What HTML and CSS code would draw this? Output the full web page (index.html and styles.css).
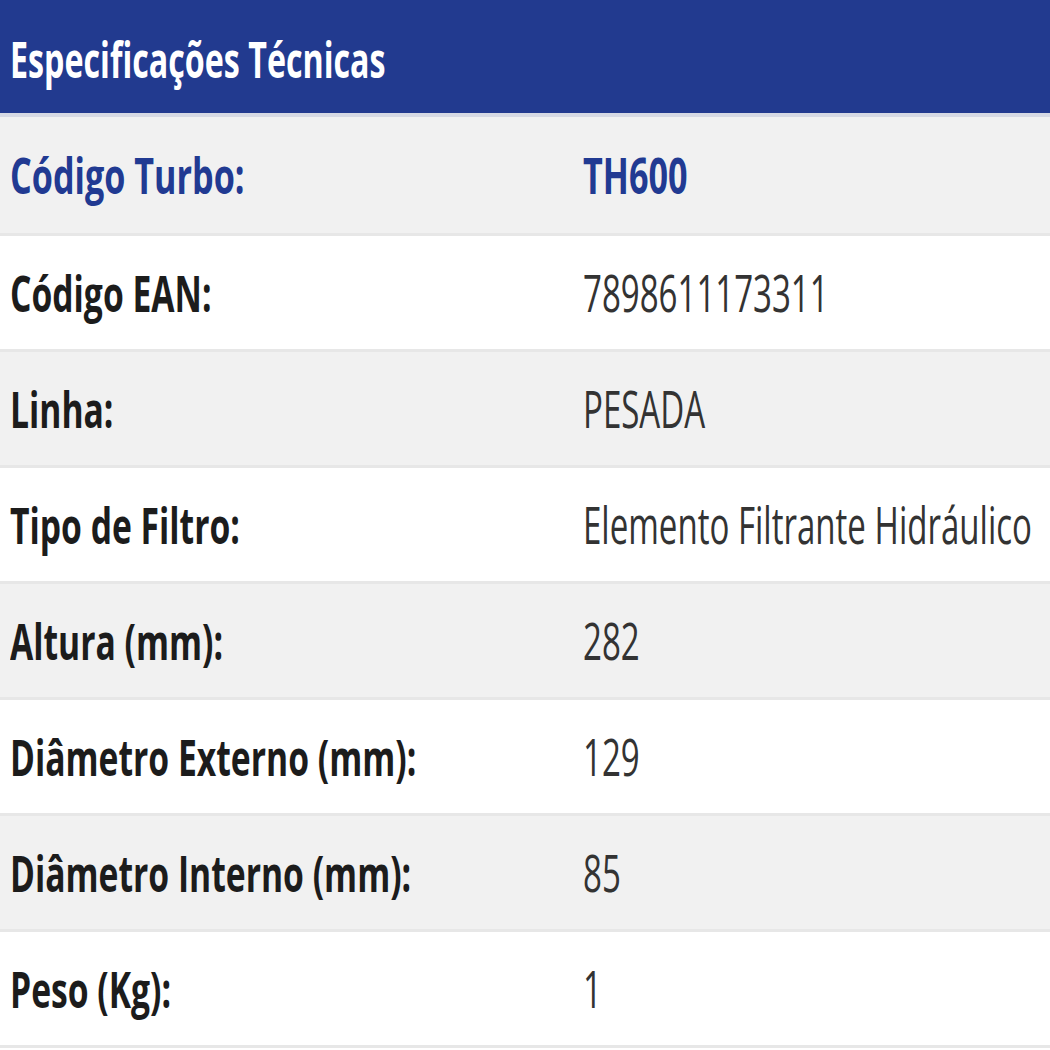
FILE: index.html
```html
<!DOCTYPE html>
<html lang="pt-BR">
<head>
<meta charset="utf-8">
<title>Especificações Técnicas</title>
<link rel="stylesheet" href="styles.css">
</head>
<body>
<section class="specs">
  <h2 class="specs-title"><span class="squeeze">Especificações Técnicas</span></h2>
  <div class="spec-row highlight">
    <div class="label"><span class="squeeze">Código Turbo:</span></div>
    <div class="value"><span class="squeeze">TH600</span></div>
  </div>
  <div class="spec-row">
    <div class="label"><span class="squeeze">Código EAN:</span></div>
    <div class="value"><span class="squeeze">7898611173311</span></div>
  </div>
  <div class="spec-row">
    <div class="label"><span class="squeeze">Linha:</span></div>
    <div class="value"><span class="squeeze">PESADA</span></div>
  </div>
  <div class="spec-row">
    <div class="label"><span class="squeeze">Tipo de Filtro:</span></div>
    <div class="value"><span class="squeeze">Elemento Filtrante Hidráulico</span></div>
  </div>
  <div class="spec-row">
    <div class="label"><span class="squeeze">Altura (mm):</span></div>
    <div class="value"><span class="squeeze">282</span></div>
  </div>
  <div class="spec-row">
    <div class="label"><span class="squeeze">Diâmetro Externo (mm):</span></div>
    <div class="value"><span class="squeeze">129</span></div>
  </div>
  <div class="spec-row">
    <div class="label"><span class="squeeze">Diâmetro Interno (mm):</span></div>
    <div class="value"><span class="squeeze">85</span></div>
  </div>
  <div class="spec-row">
    <div class="label"><span class="squeeze">Peso (Kg):</span></div>
    <div class="value"><span class="squeeze">1</span></div>
  </div>
</section>
</body>
</html>
```
FILE: styles.css
```css
html, body {
  margin: 0;
  padding: 0;
  background: #ffffff;
}

body {
  font-family: "Open Sans", "Noto Sans", "DejaVu Sans", sans-serif;
  width: 1050px;
  height: 1050px;
  overflow: hidden;
}

.specs {
  display: flex;
  flex-direction: column;
  overflow: hidden;
}

.squeeze {
  display: inline-block;
  white-space: nowrap;
  transform-origin: left center;
}

.specs-title {
  margin: 0;
  height: 113px;
  background: #223a8f;
  color: #ffffff;
  font-size: 51px;
  font-weight: 700;
  line-height: 1.4;
  display: flex;
  align-items: center;
  padding: 0 10px;
  box-sizing: content-box;
  border-bottom: 4px solid #d6d9e4;
  overflow: hidden;
}

.specs-title .squeeze {
  transform: scaleX(0.632);
  margin-top: 4px;
}

.spec-row {
  display: grid;
  grid-template-columns: 573px 1fr;
  align-items: center;
  height: 113px;
  border-bottom: 3px solid #e7e7e7;
  background: #ffffff;
}

.spec-row:nth-of-type(odd) {
  background: #f1f1f1;
}

.spec-row:first-of-type {
  height: 116px;
}

.label,
.value {
  padding-left: 10px;
  font-size: 51px;
  line-height: 1.4;
  color: #1c1c1c;
  overflow: hidden;
  min-width: 0;
}

.label {
  font-weight: 700;
}

.label .squeeze {
  transform: scaleX(0.66);
}

.value {
  font-weight: 400;
  color: #333333;
}

.value .squeeze {
  transform: scaleX(0.648);
}

.highlight .label,
.highlight .value {
  color: #213a92;
  font-weight: 700;
}

.highlight .label .squeeze {
  transform: scaleX(0.67);
}

.highlight .value .squeeze {
  transform: scaleX(0.67);
}
```
